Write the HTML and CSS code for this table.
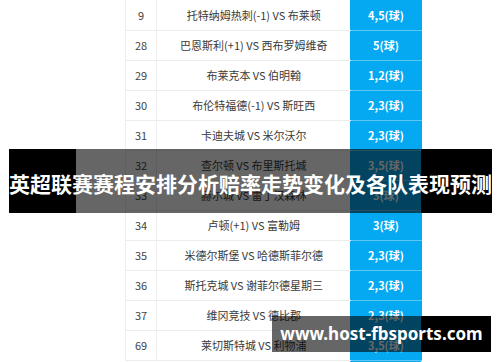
FILE: index.html
```html
<!DOCTYPE html>
<html lang="zh-CN">
<head>
<meta charset="utf-8">
<title>英超联赛赛程安排分析赔率走势变化及各队表现预测</title>
<link rel="stylesheet" href="styles.css">
</head>
<body>
<div class="page">
  <div class="sheet">
    <table class="odds">
      <tr><td class="num">9</td><td class="match">托特纳姆热刺(-1) VS 布莱顿</td><td class="res">4,5(球)</td></tr>
      <tr><td class="num">28</td><td class="match">巴恩斯利(+1) VS 西布罗姆维奇</td><td class="res">5(球)</td></tr>
      <tr><td class="num">29</td><td class="match">布莱克本 VS 伯明翰</td><td class="res">1,2(球)</td></tr>
      <tr><td class="num">30</td><td class="match">布伦特福德(-1) VS 斯旺西</td><td class="res">2,3(球)</td></tr>
      <tr><td class="num">31</td><td class="match">卡迪夫城 VS 米尔沃尔</td><td class="res">2,3(球)</td></tr>
      <tr><td class="num">32</td><td class="match">查尔顿 VS 布里斯托城</td><td class="res">3,5(球)</td></tr>
      <tr><td class="num">33</td><td class="match">赫尔城 VS 雷丁汉森林</td><td class="res">3(球)</td></tr>
      <tr><td class="num">34</td><td class="match">卢顿(+1) VS 富勒姆</td><td class="res">3(球)</td></tr>
      <tr><td class="num">35</td><td class="match">米德尔斯堡 VS 哈德斯菲尔德</td><td class="res">2,3(球)</td></tr>
      <tr><td class="num">36</td><td class="match">斯托克城 VS 谢菲尔德星期三</td><td class="res">2,3(球)</td></tr>
      <tr><td class="num">37</td><td class="match">维冈竞技 VS 德比郡</td><td class="res">2,3(球)</td></tr>
      <tr><td class="num">69</td><td class="match">莱切斯特城 VS 利物浦</td><td class="res">3,5(球)</td></tr>
    </table>
  </div>
  <div class="banner">英超联赛赛程安排分析赔率走势变化及各队表现预测</div>
  <div class="mark">www.host-fbsports.com</div>
</div>
</body>
</html>
```

FILE: styles.css
```css
* { box-sizing: border-box; }
html, body { margin: 0; padding: 0; background: #fff; }
body {
  width: 500px;
  height: 362px;
  overflow: hidden;
  font-family: "Noto Sans CJK SC", "Noto Sans", sans-serif;
}
.page {
  position: relative;
  width: 500px;
  height: 362px;
}
.sheet {
  margin-left: 76px;
  width: 345px;
  height: 362px;
  padding-left: 49px;
  background: linear-gradient(to left, #05a9f1 71px, transparent 71px);
}
.odds {
  border-collapse: collapse;
  width: 296px;
  table-layout: fixed;
}
.odds tr { height: 30px; }
.odds td {
  padding: 0;
  height: 30px;
  text-align: center;
  vertical-align: middle;
  font-size: 11px;
  line-height: 14px;
  white-space: nowrap;
  border-bottom: 1px solid #ececec;
}
.num {
  width: 31px;
  color: #444;
  border-left: 1px solid #eeeeee;
  border-right: 1px solid #eeeeee;
}
.match {
  width: 194px;
  color: #3a3a3a;
}
.res {
  width: 71px;
  color: #fff;
  font-weight: 700;
  background: #05a9f1;
  border-bottom-color: #5cc7f5 !important;
}
.banner {
  position: absolute;
  left: 9px;
  top: 149px;
  width: 483px;
  height: 64px;
  padding-top: 4px;
  background: linear-gradient(to right, #000 67px, rgba(0,0,0,0.6) 67px, rgba(0,0,0,0.6) 412px, #000 412px);
  color: #fff;
  font-family: "Noto Sans CJK SC", sans-serif;
  font-weight: 700;
  font-size: 21px;
  line-height: 60px;
  text-align: center;
  white-space: nowrap;
  letter-spacing: 0;
}
.mark {
  position: absolute;
  left: 272px;
  top: 316px;
  width: 219px;
  height: 36px;
  background: linear-gradient(to right, rgba(0,0,0,0.6) 149px, #000 149px);
  color: #fff;
  font-family: "Noto Sans", sans-serif;
  font-weight: 700;
  font-size: 17px;
  line-height: 36px;
  text-align: center;
  white-space: nowrap;
}
```
